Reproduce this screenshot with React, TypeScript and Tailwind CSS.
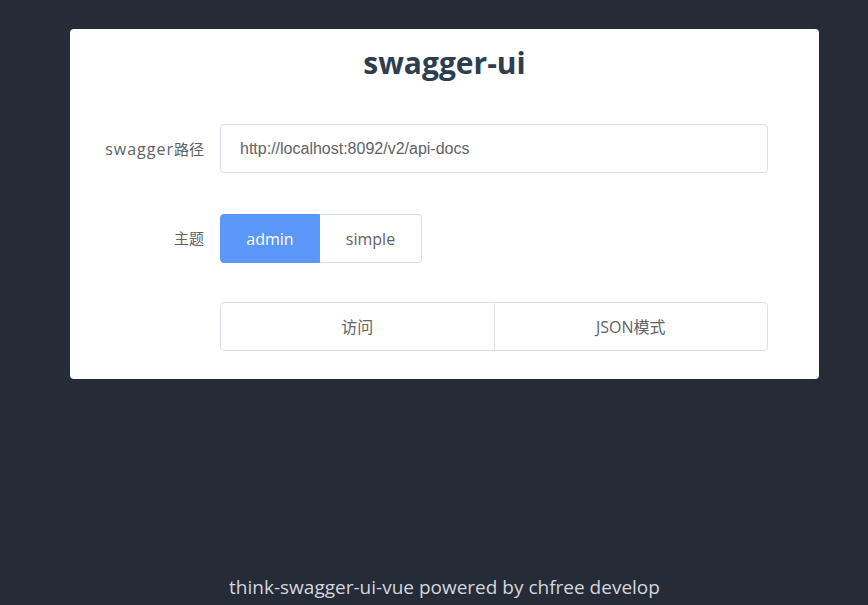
import { useState } from "react";

const App = () => {
  const [theme, setTheme] = useState("admin");

  return (
    <div className="min-h-screen bg-[#262b38] flex flex-col font-['Open_Sans','Noto_Sans_CJK_SC',sans-serif]">
      <div className="ml-[70px] mt-[29px] w-[749px] bg-white rounded-[4px] pt-[15px] pb-[28px] pr-[51px]">
        <h1 className="text-center pl-[51px] text-[30px] leading-[37px] font-bold text-[#2c3e50]">
          swagger-ui
        </h1>

        <div className="mt-[43px] flex items-center">
          <label className="w-[150px] pr-[16px] text-right text-[15px] text-[#606266]">
            <span className="text-[16px] tracking-[1px]">swagger</span>路径
          </label>
          <input
            className="flex-1 h-[49px] px-[19px] border border-[#dcdfe6] rounded-[4px] text-[16px] text-[#606266] font-['Liberation_Sans','Noto_Sans_CJK_SC',sans-serif] outline-none"
            defaultValue="http://localhost:8092/v2/api-docs"
          />
        </div>

        <div className="mt-[41px] flex items-center">
          <label className="w-[150px] pr-[16px] text-right text-[15px] text-[#606266]">
            主题
          </label>
          <div className="flex">
            {["admin", "simple"].map((t, i) => (
              <button
                key={t}
                onClick={() => setTheme(t)}
                className={
                  (theme === t
                    ? "bg-[#5a97f7] text-white border-[#5a97f7] "
                    : "bg-white text-[#606266] border-[#dcdfe6] ") +
                  (i === 0 ? "rounded-l-[4px] w-[100px] " : "rounded-r-[4px] w-[102px] border-l-0 ") +
                  "h-[49px] border text-[16px]"
                }
              >
                {t}
              </button>
            ))}
          </div>
        </div>

        <div className="mt-[39px] flex items-center">
          <div className="w-[150px]" />
          <div className="flex-1 flex h-[49px] border border-[#dcdfe6] rounded-[4px] text-[16px] text-[#606266]">
            <button className="flex-1 border-r border-[#dcdfe6]">访问</button>
            <button className="flex-1">JSON模式</button>
          </div>
        </div>
      </div>

      <div className="mt-auto mb-[4px] ml-[70px] w-[749px] text-center text-[19px] leading-[28px] text-[#d3d6dc]">
        think-swagger-ui-vue powered by chfree develop
      </div>
    </div>
  );
};

export default App;
